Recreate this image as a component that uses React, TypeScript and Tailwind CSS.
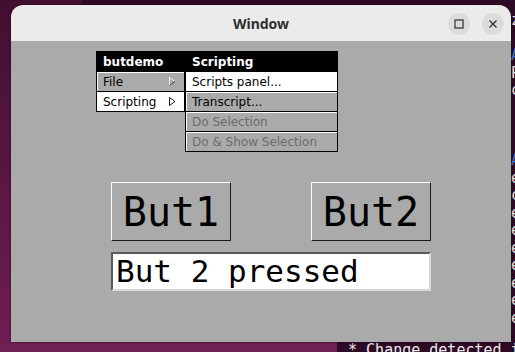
import React from "react";

const mono = { fontFamily: '"DejaVu Sans Mono", monospace' } as const;
const sans = { fontFamily: '"DejaVu Sans", sans-serif' } as const;

function Arrow({ dark }: { dark?: boolean }) {
  return (
    <svg width="7" height="9" viewBox="0 0 7 9" className="shrink-0">
      <polygon
        points="0.5,0.5 6,4.5 0.5,8.5"
        fill="none"
        stroke={dark ? "#222" : "#f2f2f2"}
        strokeWidth="1"
      />
      {!dark && <polyline points="0.5,8.5 6,4.5" fill="none" stroke="#333" strokeWidth="1" />}
    </svg>
  );
}

function Row({
  children,
  kind,
}: {
  children: React.ReactNode;
  kind: "head" | "gray" | "white" | "disabled";
}) {
  const cls =
    kind === "head"
      ? "bg-black text-white font-bold"
      : kind === "white"
      ? "bg-white text-black"
      : kind === "disabled"
      ? "bg-[#aaaaaa] text-[#6c6c6c] shadow-[inset_1px_1px_0_#ffffff]"
      : "bg-[#aaaaaa] text-black shadow-[inset_1px_1px_0_#ffffff]";
  return (
    <div className={`h-[19px] flex items-center justify-between pl-[6px] pr-[8px] text-[12px] leading-none ${cls}`}>
      {children}
    </div>
  );
}

const rightChars = ["z", "", "A", "P", "c", "", "", "", "A", "e", "c", "e", "e", "e", "e", "e", "e", "e"];

export default function App() {
  return (
    <div className="relative w-[515px] h-[352px] overflow-hidden bg-gradient-to-b from-[#430f31] to-[#6e1f53]">
      {/* terminal behind (top) */}
      <div className="absolute left-[82px] top-0 w-[433px] h-[200px] bg-[#2f0a24] overflow-hidden">
        <div className="absolute left-[2px] top-[-12px] text-[15px] leading-none text-[#d8d8d8] whitespace-pre" style={mono}>
          {" Mi Sol l  d Gran nder  USO   Da    Ca  USO  l Sel c d "}
        </div>
      </div>
      {/* terminal right / bottom */}
      <div className="absolute left-[337px] top-[6px] right-0 bottom-0 bg-[#2f0a24] overflow-hidden">
        <div className="absolute left-[174px] top-[6px] flex flex-col text-[15px] leading-[17.5px]" style={mono}>
          {rightChars.map((c, i) => (
            <div key={i} className={c === "A" ? "text-[#3b78d8] h-[17.5px]" : "text-[#e6e6e6] h-[17.5px]"}>
              {c || "\u00a0"}
            </div>
          ))}
        </div>
        <div className="absolute left-[2px] top-[337px] text-[15px] leading-none text-[#ececec] whitespace-pre" style={mono}>
          {" * Change detected i"}
        </div>
      </div>

      {/* Window */}
      <div className="absolute left-[11px] top-[5px] w-[500px] h-[337px] flex flex-col rounded-t-[12px] overflow-hidden shadow-[0_0_3px_rgba(0,0,0,0.5)]">
        <div className="relative h-[36px] shrink-0 bg-[#ebebeb] flex items-center justify-center">
          <span className="text-[14px] font-bold text-[#2e2e2e]" style={{ fontFamily: '"Noto Sans", sans-serif' }}>
            Window
          </span>
          <div className="absolute right-[7px] top-[8px] flex gap-[12px]">
            <div className="w-[22px] h-[22px] rounded-full bg-[#dcdcdc] flex items-center justify-center">
              <svg width="10" height="10" viewBox="0 0 10 10">
                <rect x="1" y="1" width="8" height="8" fill="none" stroke="#2e2e2e" strokeWidth="1.2" />
              </svg>
            </div>
            <div className="w-[22px] h-[22px] rounded-full bg-[#dcdcdc] flex items-center justify-center">
              <svg width="10" height="10" viewBox="0 0 10 10">
                <path d="M1.5 1.5 L8.5 8.5 M8.5 1.5 L1.5 8.5" stroke="#2e2e2e" strokeWidth="1.3" />
              </svg>
            </div>
          </div>
        </div>

        <div className="flex-1 bg-[#aaaaaa] flex flex-col" style={sans}>
          {/* menus */}
          <div className="flex items-start ml-[85px] mt-[10px]">
            <div className="w-[89px] bg-black border border-black flex flex-col gap-px">
              <Row kind="head">butdemo</Row>
              <Row kind="gray">
                <span>File</span>
                <Arrow />
              </Row>
              <Row kind="white">
                <span>Scripting</span>
                <Arrow dark />
              </Row>
            </div>
            <div className="w-[153px] bg-black border border-black flex flex-col gap-px">
              <Row kind="head">Scripting</Row>
              <Row kind="white">Scripts panel...</Row>
              <Row kind="gray">Transcript...</Row>
              <Row kind="disabled">Do Selection</Row>
              <Row kind="disabled">Do &amp; Show Selection</Row>
            </div>
          </div>

          {/* buttons */}
          <div className="flex ml-[100px] mt-[30px] gap-[80px]">
            <div
              className="w-[120px] h-[59px] border border-t-white border-l-white border-b-[#1a1a1a] border-r-[#1a1a1a] flex items-center justify-center text-[40px] leading-none text-black"
              style={mono}
            >
              But1
            </div>
            <div
              className="w-[120px] h-[59px] border border-t-white border-l-white border-b-[#1a1a1a] border-r-[#1a1a1a] flex items-center justify-center text-[40px] leading-none text-black"
              style={mono}
            >
              But2
            </div>
          </div>

          {/* text field */}
          <div
            className="ml-[100px] mt-[11px] w-[320px] h-[39px] bg-white border-[2px] border-t-[#5a5a5a] border-l-[#5a5a5a] border-b-[#d8d8d8] border-r-[#d8d8d8] pl-[3px] text-[31px] leading-[34px] text-black whitespace-pre"
            style={mono}
          >
            But 2 pressed
          </div>
        </div>
      </div>
    </div>
  );
}
